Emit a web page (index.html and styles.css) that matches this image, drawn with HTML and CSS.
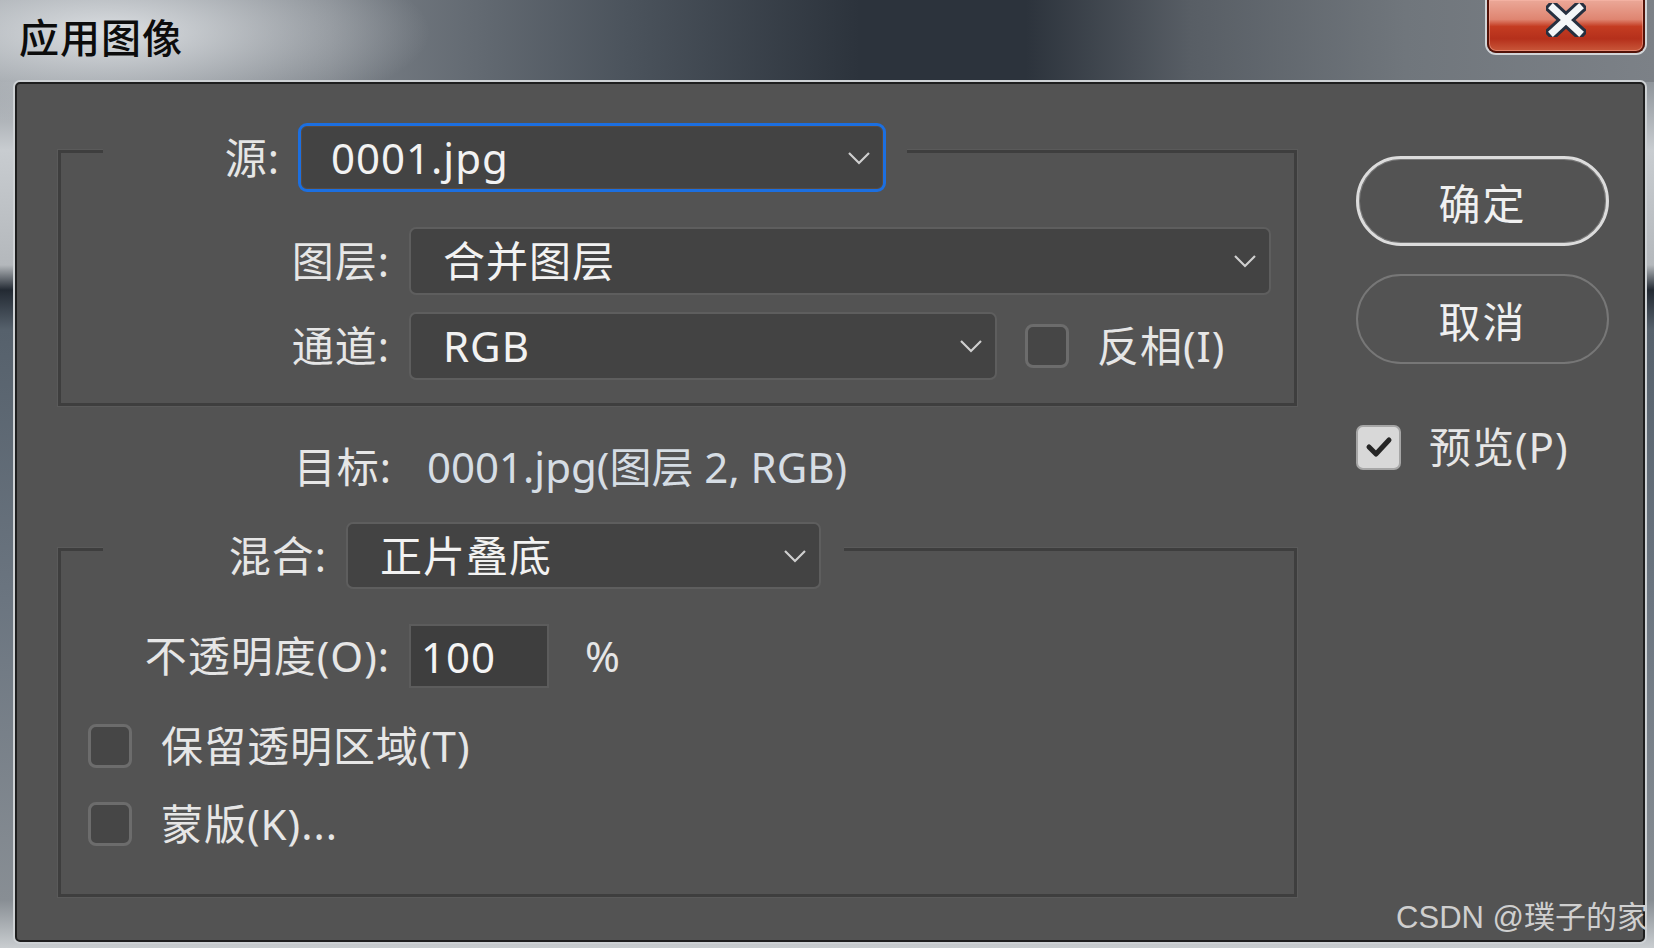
FILE: index.html
```html
<!DOCTYPE html>
<html lang="zh-CN">
<head>
<meta charset="utf-8">
<title>应用图像</title>
<link rel="stylesheet" href="styles.css">
</head>
<body>
<div class="window">
  <header class="titlebar">
    <h1 class="title">应用图像</h1>
    <button class="close" aria-label="关闭">
      <svg width="40" height="34" viewBox="0 0 40 34"><path d="M7 5 L33 29 M33 5 L7 29" stroke="#263040" stroke-width="13" stroke-linecap="square"/><path d="M7 5 L33 29 M33 5 L7 29" stroke="#f4f6f8" stroke-width="7" stroke-linecap="square"/></svg>
    </button>
  </header>
  <main class="panel">
    <div class="left">
      <section class="group group-source">
        <div class="legend legend-source">
          <span class="label">源:</span>
          <div class="select select-focus w-source"><span>0001.jpg</span><svg class="chev" width="24" height="14" viewBox="0 0 24 14"><polyline points="2,2 12,12 22,2" fill="none" stroke="#cfcfcf" stroke-width="2.2"/></svg></div>
        </div>
        <div class="row row-layer">
          <span class="label col">图层:</span>
          <div class="select w-layer"><span>合并图层</span><svg class="chev" width="24" height="14" viewBox="0 0 24 14"><polyline points="2,2 12,12 22,2" fill="none" stroke="#cfcfcf" stroke-width="2.2"/></svg></div>
        </div>
        <div class="row row-channel">
          <span class="label col">通道:</span>
          <div class="select w-channel"><span>RGB</span><svg class="chev" width="24" height="14" viewBox="0 0 24 14"><polyline points="2,2 12,12 22,2" fill="none" stroke="#cfcfcf" stroke-width="2.2"/></svg></div>
          <span class="box box-invert"></span>
          <span class="label box-label">反相(I)</span>
        </div>
      </section>

      <div class="target">
        <span class="label target-label">目标:</span>
        <span class="target-value">0001.jpg(图层 2, RGB)</span>
      </div>

      <section class="group group-blend">
        <div class="legend legend-blend">
          <span class="label">混合:</span>
          <div class="select w-blend"><span>正片叠底</span><svg class="chev" width="24" height="14" viewBox="0 0 24 14"><polyline points="2,2 12,12 22,2" fill="none" stroke="#cfcfcf" stroke-width="2.2"/></svg></div>
        </div>
        <div class="row row-opacity">
          <span class="label col">不透明度(O):</span>
          <div class="num">100</div>
          <span class="label pct">%</span>
        </div>
        <div class="opt opt-first">
          <span class="box"></span>
          <span class="label opt-label">保留透明区域(T)</span>
        </div>
        <div class="opt opt-second">
          <span class="box"></span>
          <span class="label opt-label">蒙版(K)...</span>
        </div>
      </section>
    </div>

    <aside class="right">
      <button class="btn btn-ok">确定</button>
      <button class="btn btn-cancel">取消</button>
      <div class="preview">
        <span class="box box-checked"><svg width="30" height="26" viewBox="0 0 30 26"><path d="M5 13 L12 20 L25 6" fill="none" stroke="#262626" stroke-width="5" stroke-linecap="round" stroke-linejoin="round"/></svg></span>
        <span class="label preview-label">预览(P)</span>
      </div>
    </aside>
  </main>
  <div class="watermark">CSDN @璞子的家</div>
</div>
</body>
</html>
```
FILE: styles.css
```css
* { box-sizing: border-box; }
html, body { margin: 0; padding: 0; }
body {
  width: 1654px;
  height: 948px;
  overflow: hidden;
  font-family: "Noto Sans", "Noto Sans CJK SC", sans-serif;
  font-size: 42px;
  color: #e8e8e8;
}

.window {
  width: 1654px;
  height: 948px;
  position: relative;
  display: flex;
  flex-direction: column;
  background:
    radial-gradient(ellipse 320px 95px at 110px 32px, rgba(228,231,234,0.9), rgba(228,231,234,0) 100%),
    linear-gradient(90deg, #8d9399 0%, #7a8087 20%, #4b535c 38%, #2c333c 52%, #2c333c 62%, #585e65 72%, #70767c 85%, #7c8187 100%) top left / 100% 82px no-repeat,
    linear-gradient(180deg, #8f959b 82px, #c8ccd0 150px, #b4b8bc 265px, #232a33 290px, #56616c 330px, #6b7580 600px, #888e94 900px, #c9cdd0 948px);
}

.titlebar {
  height: 82px;
  display: flex;
  align-items: flex-start;
  flex: none;
}

.title {
  margin: 13px 0 0 19px;
  font-family: "Noto Sans CJK SC", sans-serif;
  font-size: 40px;
  font-weight: 500;
  line-height: 46px;
  letter-spacing: 1px;
  color: #0c0c0c;
}

.close {
  margin: 0 9px 0 auto;
  width: 158px;
  height: 53px;
  padding: 3px 0 0 0;
  border: 2px solid #521208;
  border-top: none;
  border-radius: 0 0 9px 9px;
  background: linear-gradient(180deg, #eba898 0%, #df8571 38%, #c43c22 52%, #b5301b 76%, #c9573a 100%);
  box-shadow: 0 0 0 2px rgba(226,228,230,0.85), inset 0 0 0 1px rgba(255,190,175,0.45);
  display: flex;
  align-items: flex-start;
  justify-content: center;
}

.panel {
  margin-left: 15px;
  width: 1630px;
  height: 860px;
  flex: none;
  background: #535353;
  border: 2px solid #1e1e1e;
  border-radius: 5px;
  box-shadow: 0 0 0 2px #cdd1d4;
  display: flex;
  align-items: flex-start;
}

.label { line-height: 50px; white-space: nowrap; color: #e6e6e6; letter-spacing: 1px; }

/* left column */
.left {
  margin-left: 41px;
  width: 1239px;
  padding-top: 66px;
  flex: none;
}

.group {
  border: 3px solid #3e3e3e;
  box-shadow: 0 0 0 1px #5a5a5a;
}
.group-source { padding-bottom: 23px; }
.group-blend { padding-bottom: 48px; }

.legend {
  display: flex;
  align-items: center;
  justify-content: flex-end;
  background: #535353;
  margin-left: 42px;
}
.legend-source { width: 804px; margin-top: -30px; gap: 18px; padding-right: 21px; }
.legend-blend { width: 741px; margin-top: -29px; gap: 19px; padding-right: 23px; }

.select {
  display: flex;
  align-items: center;
  justify-content: space-between;
  background: #434343;
  border: 2px solid #5e5e5e;
  border-radius: 7px;
  padding: 0 12px 0 32px;
  color: #f2f2f2;
  line-height: 50px;
  white-space: nowrap;
  letter-spacing: 1px;
  flex: none;
}
.select-focus {
  border: 3px solid #1c6fe0;
  border-radius: 9px;
  padding-left: 30px;
  box-shadow: inset 0 0 0 1px #5b4b3e;
}
.w-source { width: 588px; height: 69px; }
.w-layer { width: 862px; height: 68px; padding-left: 32px; }
.w-channel { width: 588px; height: 68px; }
.w-blend { width: 475px; height: 67px; padding-left: 32px; }
.chev { flex: none; }

.row { display: flex; align-items: center; }
.col { width: 329px; text-align: right; margin-right: 19px; flex: none; }
.row-layer { margin-top: 35px; }
.row-channel { margin-top: 17px; }

.box {
  width: 44px;
  height: 44px;
  flex: none;
  border: 3px solid #6c6c6c;
  border-radius: 8px;
  background: #464646;
  display: flex;
  align-items: center;
  justify-content: center;
}
.box-invert { margin-left: 28px; }
.box-label { margin-left: 28px; }

.target {
  display: flex;
  align-items: center;
  height: 50px;
  margin: 36px 0 56px;
}
.target-label { width: 334px; text-align: right; margin-right: 35px; flex: none; }
.target-value { line-height: 50px; color: #d6dde4; white-space: nowrap; }

.row-opacity { margin-top: 35px; }
.num {
  width: 140px;
  height: 64px;
  flex: none;
  background: #3e3e3e;
  border: 2px solid #5c5c5c;
  padding-left: 10px;
  display: flex;
  align-items: center;
  color: #f4f4f4;
  letter-spacing: 1px;
}
.pct { margin-left: 36px; }

.opt { display: flex; align-items: center; height: 44px; margin-left: 27px; }
.opt-first { margin-top: 36px; }
.opt-second { margin-top: 34px; }
.opt-label { margin-left: 29px; }

/* right column */
.right {
  margin-left: 59px;
  width: 253px;
  padding-top: 72px;
  flex: none;
  display: flex;
  flex-direction: column;
}
.btn {
  height: 90px;
  border-radius: 45px;
  background: transparent;
  font-family: "Noto Sans CJK SC", sans-serif;
  font-size: 42px;
  letter-spacing: 2px;
  color: #f0f0f0;
  padding: 0;
}
.btn-ok { border: 3px solid #dcdcdc; box-shadow: inset 0 0 0 1px #7a7a7a; }
.btn-cancel { margin-top: 28px; border: 2px solid #777777; }

.preview { margin-top: 58px; display: flex; align-items: center; }
.box-checked { width: 45px; height: 45px; background: #d8d8d8; border: 2px solid #a6a6a6; border-radius: 7px; }
.preview-label { margin-left: 28px; }

.watermark {
  position: absolute;
  right: 6px;
  top: 896px;
  font-family: "Liberation Sans", "Noto Sans CJK SC", sans-serif;
  font-size: 31px;
  line-height: 44px;
  color: #cfcfcf;
  white-space: nowrap;
}
```
